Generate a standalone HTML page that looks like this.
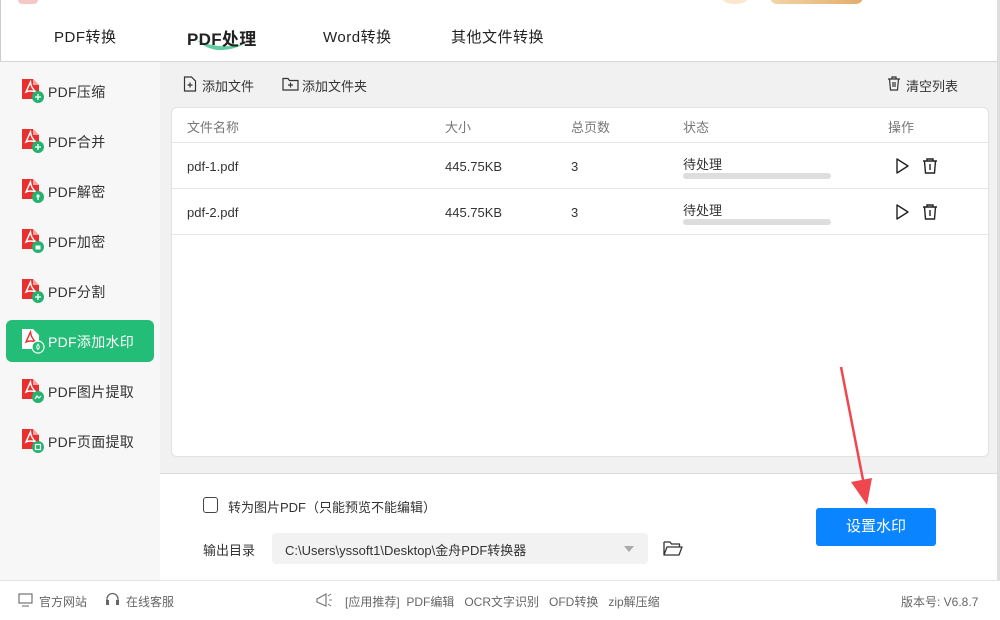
<!DOCTYPE html>
<html><head><meta charset="utf-8">
<style>
*{margin:0;padding:0;box-sizing:border-box}
body{width:1000px;height:620px;overflow:hidden;background:#fff;font-family:"Liberation Sans","Noto Sans CJK SC",sans-serif;color:#333;position:relative;font-size:13px}
.abs{position:absolute}
.tab{position:absolute;top:26px;font-size:16px;color:#222;letter-spacing:0.5px}
.side{left:0;top:62px;width:160px;height:518px;background:#f7f7f7}
.item{position:absolute;left:6px;width:148px;height:42px;border-radius:6px}
.item .ic{position:absolute;left:15px;top:9px}
.item span{position:absolute;left:42px;top:12px;font-size:14px;color:#333;letter-spacing:0.3px}
.item.on{background:#23bd77}
.item.on span{color:#fff}
.main{left:160px;top:62px;width:837px;height:411px;background:#f1f1f1}
.card{left:171px;top:107px;width:818px;height:350px;background:#fff;border:1px solid #e3e3e3;border-radius:6px}
.th{position:absolute;top:117px;font-size:13px;color:#777}
.row{position:absolute;left:172px;width:816px;border-top:1px solid #e6e6e6}
.td{position:absolute;font-size:13px;color:#333}
.bar{position:absolute;left:683px;width:148px;height:6px;border-radius:3px;background:#ddd}
.foot{left:0;top:580px;width:1000px;height:40px;border-top:1px solid #e5e5e5;background:#fff}
.ft{position:absolute;top:593px;font-size:12px;color:#666}
</style></head><body>
<div class="abs" style="left:18px;top:-8px;width:20px;height:12px;background:#f7c7c7;border-radius:4px"></div>
<div class="abs" style="left:722px;top:-8px;width:26px;height:12px;background:#fbe8cc;border-radius:50%"></div>
<div class="abs" style="left:770px;top:-10px;width:93px;height:14px;background:linear-gradient(90deg,#f2d4a8,#e3ac6c);border-radius:8px"></div>
<div class="abs" style="left:997px;top:0;width:3px;height:620px;background:#ddd"></div>
<div class="abs" style="left:0;top:0;width:1px;height:620px;background:#ccc"></div>

<div class="tab" style="left:54px;font-size:15px">PDF转换</div>
<svg class="abs" style="left:195px;top:36px" width="52" height="20"><path d="M2 4 Q20 22 50 8 Q22 14 2 4Z" fill="#38c08a" opacity=".8"/></svg>
<div class="tab" style="left:187px;font-weight:bold;font-size:17px;top:25px;letter-spacing:0.3px">PDF处理</div>
<div class="tab" style="left:323px;font-size:15px">Word转换</div>
<div class="tab" style="left:451px;font-size:15px">其他文件转换</div>
<div class="abs" style="left:0;top:61px;width:997px;height:1px;background:#d6d6d6"></div>

<div class="abs side"></div>
<div class="abs main"></div>

<svg width="0" height="0" style="position:absolute"><defs>
<g id="pdf"><path d="M1 0h11l6 6v14H1z" fill="#e8312f"/><path d="M12 0v6h6z" fill="#f7a1a0"/><path d="M5 13 Q9 4 9.5 3 Q10 9 15 13 Q9 11 5 13Z" fill="none" stroke="#fff" stroke-width="1.4"/></g>
</defs></svg>
<div class="item" style="top:70px"><svg class="ic" width="26" height="26"><use href="#pdf"/><circle cx="17" cy="18" r="6" fill="#23b36f"/><path d="M14 18h6M17 15v6" stroke="#fff" stroke-width="1.3"/></svg><span>PDF压缩</span></div>
<div class="item" style="top:120px"><svg class="ic" width="26" height="26"><use href="#pdf"/><circle cx="17" cy="18" r="6" fill="#23b36f"/><path d="M14 18h6M17 15v6" stroke="#fff" stroke-width="1.3"/></svg><span>PDF合并</span></div>
<div class="item" style="top:170px"><svg class="ic" width="26" height="26"><use href="#pdf"/><circle cx="17" cy="18" r="6" fill="#23b36f"/><circle cx="17" cy="17" r="1.6" fill="#fff"/><path d="M17 18v3" stroke="#fff" stroke-width="1.3"/></svg><span>PDF解密</span></div>
<div class="item" style="top:220px"><svg class="ic" width="26" height="26"><use href="#pdf"/><circle cx="17" cy="18" r="6" fill="#23b36f"/><rect x="14.5" y="16.5" width="5" height="4" fill="#fff"/></svg><span>PDF加密</span></div>
<div class="item" style="top:270px"><svg class="ic" width="26" height="26"><use href="#pdf"/><circle cx="17" cy="18" r="6" fill="#23b36f"/><path d="M14 18h6M17 15v6" stroke="#fff" stroke-width="1.3"/></svg><span>PDF分割</span></div>
<div class="item on" style="top:320px"><svg class="ic" width="26" height="26"><path d="M1 0h11l6 6v14H1z" fill="#fff"/><path d="M5 13 Q9 4 9.5 3 Q10 9 15 13 Q9 11 5 13Z" fill="none" stroke="#e8312f" stroke-width="1.4"/><circle cx="17" cy="18" r="6" fill="#23bd77" stroke="#fff" stroke-width="1.2"/><path d="M17 15 Q14.5 18.5 17 20.5 Q19.5 18.5 17 15Z" fill="none" stroke="#fff" stroke-width="1"/></svg><span>PDF添加水印</span></div>
<div class="item" style="top:370px"><svg class="ic" width="26" height="26"><use href="#pdf"/><circle cx="17" cy="18" r="6" fill="#23b36f"/><path d="M14 20l2-3 2 2 2-2" stroke="#fff" fill="none" stroke-width="1.2"/></svg><span>PDF图片提取</span></div>
<div class="item" style="top:420px"><svg class="ic" width="26" height="26"><use href="#pdf"/><circle cx="17" cy="18" r="6" fill="#23b36f"/><rect x="14.5" y="15.5" width="5" height="5" fill="none" stroke="#fff" stroke-width="1.2"/></svg><span>PDF页面提取</span></div>

<svg class="abs" style="left:183px;top:76px" width="14" height="16"><path d="M1.5 1h7l4 4v10h-11z" fill="none" stroke="#333" stroke-width="1.2"/><path d="M4.5 9h5M7 6.5v5" stroke="#333" stroke-width="1.2"/></svg>
<div class="abs" style="left:202px;top:76px;font-size:13px">添加文件</div>
<svg class="abs" style="left:282px;top:77px" width="17" height="14"><path d="M1 1.5h5l1.5 2h8.5v9.5h-15z" fill="none" stroke="#333" stroke-width="1.2"/><path d="M6 8h5M8.5 5.5v5" stroke="#333" stroke-width="1.2"/></svg>
<div class="abs" style="left:302px;top:76px;font-size:13px">添加文件夹</div>
<svg class="abs" style="left:887px;top:76px" width="14" height="15"><path d="M1 3h12M5 3V1h4v2M2.5 3l1 11h7l1-11M6 6v5M8 6v5" fill="none" stroke="#333" stroke-width="1.2"/></svg>
<div class="abs" style="left:906px;top:76px;font-size:13px">清空列表</div>

<div class="abs card"></div>
<div class="th" style="left:187px">文件名称</div>
<div class="th" style="left:445px">大小</div>
<div class="th" style="left:571px">总页数</div>
<div class="th" style="left:683px">状态</div>
<div class="th" style="left:888px">操作</div>
<div class="row" style="top:142px"></div>
<div class="row" style="top:188px"></div>
<div class="row" style="top:234px"></div>
<div class="td" style="left:187px;top:159px">pdf-1.pdf</div>
<div class="td" style="left:445px;top:159px">445.75KB</div>
<div class="td" style="left:571px;top:159px">3</div>
<div class="td" style="left:683px;top:154px">待处理</div>
<div class="bar" style="top:173px"></div>
<div class="td" style="left:187px;top:205px">pdf-2.pdf</div>
<div class="td" style="left:445px;top:205px">445.75KB</div>
<div class="td" style="left:571px;top:205px">3</div>
<div class="td" style="left:683px;top:200px">待处理</div>
<div class="bar" style="top:219px"></div>
<svg class="abs" style="left:895px;top:157px" width="50" height="18"><path d="M2 2l11 7-11 7z" fill="none" stroke="#222" stroke-width="1.4" stroke-linejoin="round"/><path d="M28 4h14M32 4V2h6v2M29.5 4l1 12h9l1-12M35 7v6" fill="none" stroke="#222" stroke-width="1.4"/></svg>
<svg class="abs" style="left:895px;top:203px" width="50" height="18"><path d="M2 2l11 7-11 7z" fill="none" stroke="#222" stroke-width="1.4" stroke-linejoin="round"/><path d="M28 4h14M32 4V2h6v2M29.5 4l1 12h9l1-12M35 7v6" fill="none" stroke="#222" stroke-width="1.4"/></svg>

<div class="abs" style="left:160px;top:473px;width:837px;height:1px;background:#ddd"></div>
<div class="abs" style="left:203px;top:497px;width:15px;height:16px;border:1.3px solid #444;border-radius:3px"></div>
<div class="abs" style="left:228px;top:497px;font-size:13px">转为图片PDF（只能预览不能编辑）</div>
<div class="abs" style="left:203px;top:540px;font-size:13px">输出目录</div>
<div class="abs" style="left:272px;top:533px;width:376px;height:31px;background:#f2f2f2;border-radius:4px"></div>
<div class="abs" style="left:285px;top:540px;font-size:13px;color:#333">C:\Users\yssoft1\Desktop\金舟PDF转换器</div>
<svg class="abs" style="left:624px;top:546px" width="10" height="7"><path d="M0 0h10L5 6z" fill="#aaa"/></svg>
<svg class="abs" style="left:663px;top:540px" width="20" height="17"><path d="M1 2h6l1.5 2h8v3M1 2v13h15l3-8H4L1 15" fill="none" stroke="#333" stroke-width="1.3" stroke-linejoin="round"/></svg>
<div class="abs" style="left:816px;top:508px;width:120px;height:38px;background:#0a84ff;border-radius:3px;color:#fff;font-size:15px;text-align:center;line-height:38px">设置水印</div>
<svg class="abs" style="left:835px;top:362px" width="45" height="150"><path d="M6 5L30 128" stroke="#f0474f" stroke-width="2.5"/><path d="M16 120L37 116L32 143z" fill="#f0474f"/></svg>

<div class="abs foot"></div>
<svg class="abs" style="left:18px;top:593px" width="15" height="14"><rect x="1" y="1" width="13" height="9" fill="none" stroke="#666" stroke-width="1.1"/><path d="M4 13h7" stroke="#666"/></svg>
<div class="ft" style="left:39px">官方网站</div>
<svg class="abs" style="left:105px;top:592px" width="15" height="16"><path d="M2 10V7a5.5 5.5 0 0 1 11 0v3" fill="none" stroke="#666" stroke-width="1.3"/><rect x="1" y="8" width="3" height="5" fill="#666"/><rect x="11" y="8" width="3" height="5" fill="#666"/></svg>
<div class="ft" style="left:126px">在线客服</div>
<svg class="abs" style="left:314px;top:590px" width="20" height="20"><path d="M3 9l9-5v12L3 12z" fill="none" stroke="#777" stroke-width="1.2"/><path d="M14 6l3-2M15 10h3M14 14l3 2" stroke="#777"/></svg>
<div class="ft" style="left:345px">[应用推荐]&nbsp;&nbsp;PDF编辑&nbsp;&nbsp;&nbsp;OCR文字识别&nbsp;&nbsp;&nbsp;OFD转换&nbsp;&nbsp;&nbsp;zip解压缩</div>
<div class="ft" style="left:901px">版本号: V6.8.7</div>
</body></html>
